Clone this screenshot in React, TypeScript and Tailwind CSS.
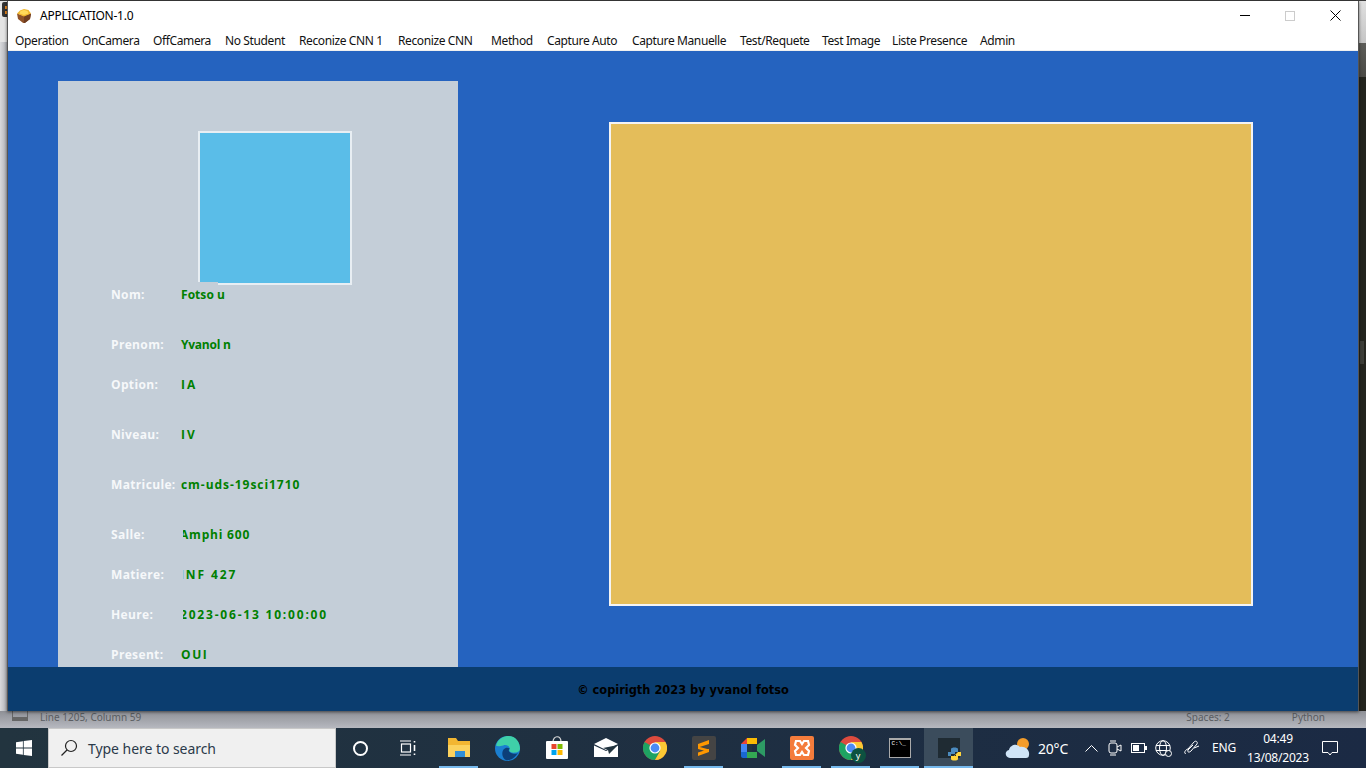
import React from "react";

const menuItems = [
  { label: "Operation", width: "w-[67px]" },
  { label: "OnCamera", width: "w-[71px]" },
  { label: "OffCamera", width: "w-[72px]" },
  { label: "No Student", width: "w-[74px]" },
  { label: "Reconize CNN 1", width: "w-[99px]" },
  { label: "Reconize CNN", width: "w-[93px]" },
  { label: "Method", width: "w-[56px]" },
  { label: "Capture Auto", width: "w-[85px]" },
  { label: "Capture Manuelle", width: "w-[108px]" },
  { label: "Test/Requete", width: "w-[82px]" },
  { label: "Test Image", width: "w-[70px]" },
  { label: "Liste Presence", width: "w-[88px]" },
  { label: "Admin", width: "w-[40px]" },
];

const rows = [
  { label: "Nom:", value: "Fotso u", space: "mt-0", track: "tracking-[0.05px]", clip: false },
  { label: "Prenom:", value: "Yvanol n", space: "mt-[30px]", track: "tracking-[-0.25px]", clip: false },
  { label: "Option:", value: "IA", space: "mt-[20px]", track: "tracking-[2px]", clip: false },
  { label: "Niveau:", value: "IV", space: "mt-[30px]", track: "tracking-[2px]", clip: false },
  { label: "Matricule:", value: "cm-uds-19sci1710", space: "mt-[30px]", track: "tracking-[0.95px]", clip: false },
  { label: "Salle:", value: "Amphi 600", space: "mt-[30px]", track: "tracking-[0.8px]", clip: true },
  { label: "Matiere:", value: "INF 427", space: "mt-[20px]", track: "tracking-[1.9px]", clip: true },
  { label: "Heure:", value: "2023-06-13 10:00:00", space: "mt-[20px]", track: "tracking-[1.8px]", clip: true },
  { label: "Present:", value: "OUI", space: "mt-[20px]", track: "tracking-[1.6px]", clip: false },
];

function InfoRow({ label, value, space, track, clip }: { label: string; value: string; space: string; track: string; clip: boolean }) {
  return (
    <div className={`flex h-[20px] items-center pt-[1px] text-[12px] font-bold font-['Open_Sans',sans-serif] ${space}`}>
      <div className="w-[70px] text-[#f6f8fa] tracking-[0.35px] whitespace-nowrap">{label}</div>
      {clip ? (
        <div className="ml-[2px] w-[200px] overflow-hidden text-[#008000] whitespace-nowrap">
          <span className={`-ml-[3px] inline-block ${track}`}>{value}</span>
        </div>
      ) : (
        <div className={`text-[#008000] whitespace-nowrap ${track}`}>{value}</div>
      )}
    </div>
  );
}

function AppIcon() {
  return (
    <svg width="16" height="16" viewBox="0 0 16 16">
      <path d="M1 5.500 8 8 15 5.500 14 11 9.500 14.500C8.500 15.200 7.500 15.200 6.500 14.500L2 11Z" fill="#8f5228" />
      <path d="M8 8 15 5.500 14 11 9.500 14.500C8.800 15 8.400 15 8 15Z" fill="#6f3d20" />
      <path d="M4 2.500 8 1 12.500 2 15 5.500 8 8.500 1 5.500Z" fill="#f0b62c" />
      <path d="M4.500 3 8 2 11.500 3 12.500 5.500 8 7 3.500 5.500Z" fill="#ffd95a" />
    </svg>
  );
}

function TaskButton({ children, active, open }: { children: React.ReactNode; active?: boolean; open?: boolean }) {
  return (
    <div className={`relative flex h-full w-[49px] shrink-0 items-center justify-center ${active ? "bg-[#3b4c5c]" : ""}`}>
      {children}
      {open && <div className={`absolute bottom-0 h-[2px] bg-[#76b9ed] ${active ? "inset-x-0" : "inset-x-[5px]"}`} />}
    </div>
  );
}

function ChromeIcon({ size = 24 }: { size?: number }) {
  return (
    <svg width={size} height={size} viewBox="0 0 24 24">
      <circle cx="12" cy="12" r="12" fill="#dd4b3e" />
      <path d="M12 12 1.600 6A12 12 0 0 0 12 24L17.200 15Z" fill="#1ea362" />
      <path d="M12 6H22.400A12 12 0 0 1 12 24L17.200 15Z" fill="#fcc934" />
      <circle cx="12" cy="12" r="5.600" fill="#fff" />
      <circle cx="12" cy="12" r="4.400" fill="#4c8bf5" />
    </svg>
  );
}

export default function App() {
  return (
    <div className="flex h-[768px] w-[1366px] flex-col overflow-hidden bg-[#b4b6bd] font-['Open_Sans',sans-serif]">
      <div className="h-[1px] bg-[#3a3a3a]" />
      <div className="flex h-[710px]">
        {/* editor behind the window, left edge */}
        <div className="flex w-[7px] shrink-0 flex-col">
          <div className="flex h-[17px] items-center bg-[#e6e6e6] pl-[2px]">
            <div className="flex h-[15px] w-[5px] flex-col justify-center gap-[2px] rounded-l-[2px] bg-[#333] pl-[3px]">
              <div className="h-[3px] w-[2px] bg-[#e8871e]" />
              <div className="h-[3px] w-[2px] bg-[#e8871e]" />
            </div>
          </div>
          <div className="h-[24px] bg-[#e4e4e4]" />
          <div className="flex-1 bg-gradient-to-r from-[#d8d9dc] to-[#aeb0b5]" />
        </div>

        {/* app window */}
        <div className="relative z-10 flex h-[710px] w-[1352px] flex-col border-x border-[#555] shadow-[0_1px_3px_rgba(0,0,0,0.55)]">
          <div className="flex h-[29px] items-center bg-white">
            <div className="ml-[8px]"><AppIcon /></div>
            <span className="ml-[8px] text-[12px] tracking-[-0.25px] text-black font-['Noto_Sans',sans-serif]">APPLICATION-1.0</span>
            <div className="ml-auto flex h-full">
              <div className="flex w-[46px] items-center justify-center">
                <div className="h-[1px] w-[10px] bg-black" />
              </div>
              <div className="flex w-[44px] items-center justify-center">
                <div className="h-[10px] w-[10px] border border-[#cccccc]" />
              </div>
              <div className="flex w-[46px] items-center justify-center">
                <svg width="11" height="11" viewBox="0 0 11 11" stroke="#000" strokeWidth="1">
                  <path d="M0.500 0.500 10.500 10.500M10.500 0.500 0.500 10.500" />
                </svg>
              </div>
            </div>
          </div>
          <div className="flex h-[21px] items-start border-b border-[#f0f0f0] bg-white pl-[7px]">
            {menuItems.map((item) => (
              <div key={item.label} className={`${item.width} shrink-0 whitespace-nowrap text-[12px] leading-[22px] text-[#111] font-['Noto_Sans',sans-serif] tracking-[-0.38px]`}>
                {item.label}
              </div>
            ))}
          </div>

          <div className="flex min-h-0 flex-1 items-start overflow-hidden bg-[#2563bf]">
            <div className="ml-[50px] mt-[30px] h-[600px] w-[400px] shrink-0 bg-[#c4ced8] pl-[53px] pt-[50px]">
              <div className="relative ml-[87px] h-[154px] w-[154px] border-2 border-[#e8eef3] bg-[#5abde8]">
                <div className="absolute -bottom-[2px] -left-[2px] h-[3px] w-[20px] bg-[#c4ced8]" />
              </div>
              <div className="mt-[-1px]">
                {rows.map((row) => (
                  <InfoRow key={row.label} {...row} />
                ))}
              </div>
            </div>
            <div className="ml-[151px] mt-[71px] h-[484px] w-[644px] shrink-0 border-2 border-[#f4f4f4] bg-[#e4bd5a]" />
          </div>

          <div className="flex h-[44px] items-center justify-center bg-[#0b3d6f] pt-[3px] text-[11.4px] font-bold text-black font-['DejaVu_Sans',sans-serif]">
            © copirigth 2023 by yvanol fotso
          </div>
        </div>

        {/* editor behind the window, right edge */}
        <div className="flex w-[7px] shrink-0 flex-col">
          <div className="h-[42px] bg-gradient-to-b from-[#e0e0e0] to-[#c4c4c4]" />
          <div className="h-[34px] bg-gradient-to-b from-[#5c5c58] to-[#4a4a46]" />
          <div className="flex-1 bg-[#23241e] pt-[264px]">
            <div className="ml-[1px] h-[23px] w-[4px] bg-[#3c3d38]" />
          </div>
        </div>
      </div>

      {/* editor status bar behind the window */}
      <div className="flex h-[17px] items-start bg-gradient-to-b from-[#8e9096] to-[#b6b8bf] pl-[12px] text-[10px] leading-[12px] text-[#5a5d62] font-['Noto_Sans',sans-serif]">
        <div className="-mt-[2px] h-[12px] w-[16px] border-x border-[#666] border-b-[4px]" />
        <span className="ml-[12px]">Line 1205, Column 59</span>
        <span className="ml-auto mr-[62px]">Spaces: 2</span>
        <span className="mr-[41px]">Python</span>
      </div>

      {/* taskbar */}
      <div className="flex h-[40px] items-center bg-gradient-to-r from-[#22343f] to-[#1b2a44] text-white font-['Noto_Sans',sans-serif]">
        <div className="flex h-full w-[48px] shrink-0 items-center justify-center">
          <svg width="16" height="16" viewBox="0 0 16 16" fill="#fff">
            <path d="M0 2.200 6.900 1.200V7.600H0ZM7.700 1.100 16 0V7.600H7.700ZM0 8.400H6.900V14.800L0 13.800ZM7.700 8.400H16V16L7.700 14.900Z" />
          </svg>
        </div>
        <div className="flex h-full w-[288px] shrink-0 items-center border border-[#c8c8c8] bg-[#f0f0f0] pl-[11px]">
          <svg width="18" height="18" viewBox="0 0 18 18" fill="none" stroke="#222" strokeWidth="1.200">
            <circle cx="11" cy="7" r="5.500" />
            <path d="M7 11 1.500 16.500" />
          </svg>
          <span className="ml-[10px] text-[14px] tracking-[-0.05px] text-[#2b3a4a]">Type here to search</span>
        </div>
        <div className="flex h-full">
          <TaskButton>
            <div className="h-[15px] w-[15px] rounded-full border-2 border-white" />
          </TaskButton>
          <TaskButton>
            <svg className="-ml-[3px]" width="18" height="16" viewBox="0 0 18 16" fill="none" stroke="#fff" strokeWidth="1.200">
              <path d="M1 1H12M1 15H12" />
              <rect x="2.500" y="4" width="9" height="8" />
              <path d="M15.500 1V2.500M15.500 5V11M15.500 13.500V15" strokeWidth="1.600" />
            </svg>
          </TaskButton>
          <TaskButton open>
            <svg width="24" height="22" viewBox="0 0 24 22">
              <path d="M1 1H9L11 4H23V20H1Z" fill="#f2b632" />
              <path d="M1 8H23V20H1Z" fill="#fbd25e" />
              <path d="M8 14H18V20H8Z" fill="#2f8fd8" />
            </svg>
          </TaskButton>
          <TaskButton>
            <svg width="25" height="25" viewBox="0 0 24 24">
              <circle cx="12" cy="12" r="12" fill="#1b7fd0" />
              <path d="M1 9C3 2 9 0 13 0 20 0 24 6 24 12 24 15 21 16 18 16 15 16 13 15 14 13 15 10 11 8 8 9 4 10 2 10 1 9Z" fill="#3fd0a8" />
              <path d="M7 17C7 12 11 10 14 12 12 14 14 17 18 17 20 17 21 17 22 16 19 22 12 25 9 22 8 21 7 19 7 17Z" fill="#0c3f78" />
            </svg>
          </TaskButton>
          <TaskButton>
            <svg width="24" height="24" viewBox="0 0 24 24">
              <path d="M8 6C8 -1 16 -1 16 6" fill="none" stroke="#ddd" strokeWidth="1.200" />
              <rect x="1" y="5" width="22" height="18" rx="1" fill="#fff" />
              <rect x="6.500" y="8" width="5" height="5" fill="#e8452c" />
              <rect x="12.500" y="8" width="5" height="5" fill="#7fba00" />
              <rect x="6.500" y="14" width="5" height="5" fill="#00a4ef" />
              <rect x="12.500" y="14" width="5" height="5" fill="#ffb900" />
            </svg>
          </TaskButton>
          <TaskButton>
            <svg width="24" height="20" viewBox="0 0 24 20">
              <path d="M0 6 12 0 24 6 12 12Z" fill="#fff" />
              <path d="M0 7.500 12 13 24 7.500V19H0Z" fill="#fff" />
              <path d="M9 10 24 7 15 16 14 12Z" fill="#22343f" />
            </svg>
          </TaskButton>
          <TaskButton>
            <ChromeIcon />
          </TaskButton>
          <TaskButton open>
            <div className="flex h-[24px] w-[24px] items-center justify-center rounded-[2px] bg-[#444444]">
              <svg width="13" height="16" viewBox="0 0 13 16" fill="#ff9800">
                <path d="M12 0V4L1 7.500V4ZM1 6.500 12 9.500V12L1 9ZM12 9V12L1 16V12.500Z" />
              </svg>
            </div>
          </TaskButton>
          <TaskButton>
            <svg width="24" height="20" viewBox="0 0 24 20">
              <path d="M6 0H16V6H6Z" fill="#fbbc04" />
              <path d="M0 6 6 0V6Z" fill="#ea4335" />
              <path d="M0 6H6V14H0Z" fill="#4285f4" />
              <path d="M0 14H6V20H2C1 20 0 19 0 18Z" fill="#1967d2" />
              <path d="M6 14H16V20H6Z" fill="#34a853" />
              <path d="M16 7 24 1V19L16 13Z" fill="#2d9b64" />
              <path d="M6 6H11V14H6Z" fill="#22343f" />
            </svg>
          </TaskButton>
          <TaskButton open>
            <div className="flex h-[24px] w-[24px] items-center justify-center rounded-[2px] bg-[#f47c3c]">
              <svg width="18" height="18" viewBox="0 0 18 18" fill="none" stroke="#fff" strokeWidth="2.200">
                <path d="M3 2H7L9 5 11 2H15L16 6 13 9 16 12 15 16H11L9 13 7 16H3L2 12 5 9 2 6Z" />
              </svg>
            </div>
          </TaskButton>
          <TaskButton open>
            <div className="relative">
              <ChromeIcon />
              <div className="absolute -bottom-[3px] -right-[3px] flex h-[15px] w-[15px] items-center justify-center rounded-full bg-[#0d5240] text-[9px] leading-none text-white">y</div>
            </div>
          </TaskButton>
          <TaskButton open>
            <div className="h-[20px] w-[22px] border border-[#aaa] border-t-[2px] bg-black pl-[2px] text-[6px] leading-[8px] text-white font-['Liberation_Mono',monospace]">C:\_</div>
          </TaskButton>
          <TaskButton active open>
            <div className="relative h-[20px] w-[22px] bg-[#1f2b33]">
              <svg className="absolute -bottom-[4px] -right-[2px]" width="15" height="16" viewBox="0 0 15 16">
                <path d="M4 7V3C4 1 11 1 11 3V6H6V7Z" fill="#4b8bbe" />
                <path d="M11 9V13C11 15 4 15 4 13V10H9V9Z" fill="#ffd43b" />
                <path d="M4 6H1V10H4V8H8V6Z" fill="#4b8bbe" />
                <path d="M11 6H14V10H11V9H7V10Z" fill="#ffd43b" />
              </svg>
            </div>
          </TaskButton>
        </div>
        <div className="ml-[32px] flex h-full items-center">
          <svg width="26" height="22" viewBox="0 0 26 22">
            <circle cx="18" cy="7" r="6" fill="#f39c2a" />
            <path d="M5 21C0 21 -1 14 4 13 5 8 12 6 15 10 20 9 25 13 24 18 24 20 23 21 21 21Z" fill="#cfe4f7" />
          </svg>
          <span className="ml-[7px] text-[14px] tracking-[-0.2px]">20°C</span>
        </div>
        <svg className="ml-[17px]" width="13" height="7" viewBox="0 0 13 7" fill="none" stroke="#fff">
          <path d="M0.500 6.500 6.500 0.500 12.500 6.500" />
        </svg>
        <svg className="ml-[10px]" width="14" height="16" viewBox="0 0 14 16" fill="none" stroke="#fff">
          <rect x="1" y="3" width="8" height="10" rx="2" />
          <path d="M9 7 13 5V11L9 9M2 1H8M2 15H8" />
        </svg>
        <svg className="ml-[9px]" width="16" height="10" viewBox="0 0 16 10">
          <rect x="0.500" y="0.500" width="13" height="9" fill="none" stroke="#fff" />
          <rect x="2" y="2" width="6" height="6" fill="#fff" />
          <rect x="14" y="3" width="2" height="4" fill="#fff" />
        </svg>
        <svg className="ml-[8px]" width="17" height="17" viewBox="0 0 17 17" fill="none" stroke="#fff">
          <circle cx="8" cy="8" r="7.300" />
          <ellipse cx="8" cy="8" rx="3.500" ry="7.300" />
          <path d="M1 5.500H15M1 10.500H15" />
          <circle cx="13.500" cy="13.500" r="3" fill="#1d2d42" />
        </svg>
        <svg className="ml-[11px]" width="17" height="17" viewBox="0 0 17 17" fill="none" stroke="#fff">
          <path d="M3 13C1 15 1 10 5 9L11 2C13 0 15 2 14 4L8 11C6 13 4 12 5 10L10 5M11 8 16 6" />
        </svg>
        <span className="ml-[12px] text-[12px] tracking-[-0.2px]">ENG</span>
        <div className="ml-[13px] flex w-[58px] flex-col items-center text-[12px] leading-[19px] tracking-[-0.2px]">
          <span>04:49</span>
          <span>13/08/2023</span>
        </div>
        <svg className="ml-[15px]" width="16" height="16" viewBox="0 0 16 16" fill="none" stroke="#fff">
          <path d="M0.500 1.500H15.500V12.500H10L8 15 6 12.500H0.500Z" />
        </svg>
      </div>
    </div>
  );
}
